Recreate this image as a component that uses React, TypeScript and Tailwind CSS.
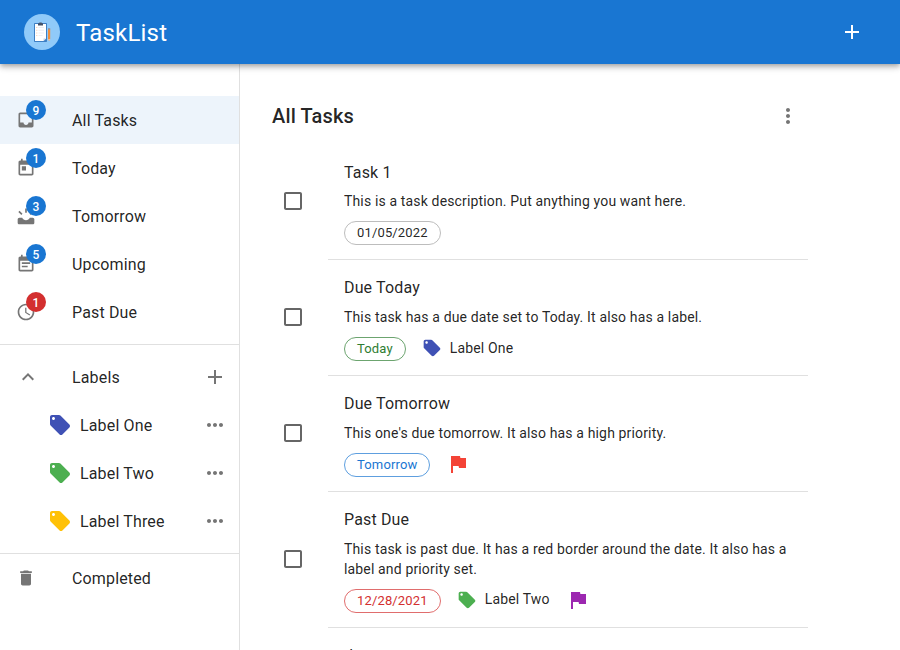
import React from "react";

const P = {
  add: "M19 13h-6v6h-2v-6H5v-2h6V5h2v6h6v2z",
  more: "M12 8c1.1 0 2-.9 2-2s-.9-2-2-2-2 .9-2 2 .9 2 2 2zm0 2c-1.1 0-2 .9-2 2s.9 2 2 2 2-.9 2-2-.9-2-2-2zm0 6c-1.1 0-2 .9-2 2s.9 2 2 2 2-.9 2-2-.9-2-2-2z",
  dots: "M6 10c-1.1 0-2 .9-2 2s.9 2 2 2 2-.9 2-2-.9-2-2-2zm12 0c-1.1 0-2 .9-2 2s.9 2 2 2 2-.9 2-2-.9-2-2-2zm-6 0c-1.1 0-2 .9-2 2s.9 2 2 2 2-.9 2-2-.9-2-2-2z",
  inbox: "M19 3H4.99c-1.11 0-1.98.89-1.98 2L3 19c0 1.1.88 2 1.99 2H19c1.1 0 2-.9 2-2V5c0-1.11-.9-2-2-2zm0 12h-4c0 1.66-1.35 3-3 3s-3-1.34-3-3H4.99V5H19v10z",
  today: "M19 3h-1V1h-2v2H8V1H6v2H5c-1.11 0-1.99.9-1.99 2L3 19c0 1.1.89 2 2 2h14c1.1 0 2-.9 2-2V5c0-1.1-.9-2-2-2zm0 16H5V8h14v11zM7 10h5v5H7z",
  upcoming: "M21.16 7.26l-1.41-1.41-3.56 3.55 1.41 1.41s3.45-3.52 3.56-3.55zM11 3h2v5h-2zM6.4 10.81L7.81 9.4 4.26 5.84 2.84 7.26c.11.03 3.56 3.55 3.56 3.55zM20 14h-3.42c-.77 1.76-2.54 3-4.58 3s-3.81-1.24-4.58-3H4c-1.1 0-2 .9-2 2v4c0 1.1.9 2 2 2h16c1.1 0 2-.9 2-2v-4c0-1.1-.9-2-2-2z",
  note: "M17 10H7v2h10v-2zm2-7h-1V1h-2v2H8V1H6v2H5c-1.11 0-1.99.9-1.99 2L3 19c0 1.1.89 2 2 2h14c1.1 0 2-.9 2-2V5c0-1.1-.9-2-2-2zm0 16H5V8h14v11zm-5-5H7v2h7v-2z",
  clock: "M11.99 2C6.47 2 2 6.48 2 12s4.47 10 9.99 10C17.52 22 22 17.52 22 12S17.52 2 11.99 2zM12 20c-4.42 0-8-3.58-8-8s3.58-8 8-8 8 3.58 8 8-3.58 8-8 8zm.5-13H11v6l5.25 3.15.75-1.23-4.5-2.67z",
  less: "M12 8l-6 6 1.41 1.41L12 10.83l4.59 4.58L18 14z",
  tag: "M21.41 11.58l-9-9C12.05 2.22 11.55 2 11 2H4c-1.1 0-2 .9-2 2v7c0 .55.22 1.05.59 1.42l9 9c.36.36.86.58 1.41.58.55 0 1.05-.22 1.41-.59l7-7c.37-.36.59-.86.59-1.41 0-.55-.23-1.06-.59-1.42zM5.5 7C4.67 7 4 6.33 4 5.5S4.67 4 5.5 4 7 4.67 7 5.5 6.33 7 5.5 7z",
  trash: "M6 19c0 1.1.9 2 2 2h8c1.1 0 2-.9 2-2V7H6v12zM19 4h-3.5l-1-1h-5l-1 1H5v2h14V4z",
  flag: "M14.4 6L14 4H5v17h2v-7h5.6l.4 2h7V6z",
  box: "M19 5v14H5V5h14m0-2H5c-1.1 0-2 .9-2 2v14c0 1.1.9 2 2 2h14c1.1 0 2-.9 2-2V5c0-1.1-.9-2-2-2z",
};

function Icon({ d, className }: { d: string; className: string }) {
  return (
    <svg viewBox="0 0 24 24" fill="currentColor" className={`shrink-0 ${className}`}>
      <path d={d} />
    </svg>
  );
}

function Logo() {
  return (
    <svg viewBox="0 0 36 36" className="size-9 shrink-0">
      <circle cx="18" cy="18" r="18" fill="#90caf9" />
      <rect x="10" y="9" width="13" height="19" rx="0.8" fill="#3d7fc4" />
      <path d="M11 10h11v14.5L19.5 27H11z" fill="#fff" />
      <path d="M22 24.5L19.5 27v-2.5z" fill="#c5d3e6" />
      <path d="M14.5 13.5h5.5M14.5 16.3h5.5M14.5 19h5.5M14.5 21.5h4" stroke="#e3e7ee" strokeWidth="0.7" />
      <path d="M12.3 13.5h1M12.3 16.3h1M12.3 19h1M12.3 21.5h1" stroke="#f7c4a0" strokeWidth="0.9" />
      <path d="M14 9.3h1.3V8.4h2.4v.9H19v2.2h-5z" fill="#455268" />
      <path d="M24 15.3h2.2V25l-1.1 2L24 25z" fill="#f28f3b" />
      <path d="M24 14.3h2.2v1.2H24z" fill="#8b8794" />
      <path d="M24 25h2.2l-1.1 2z" fill="#f6c79c" />
    </svg>
  );
}

const nav = [
  { name: "All Tasks", icon: P.inbox, count: 9, row: "bg-[#1976d2]/8", badge: "bg-[#1976d2]" },
  { name: "Today", icon: P.today, count: 1, row: "", badge: "bg-[#1976d2]" },
  { name: "Tomorrow", icon: P.upcoming, count: 3, row: "", badge: "bg-[#1976d2]" },
  { name: "Upcoming", icon: P.note, count: 5, row: "", badge: "bg-[#1976d2]" },
  { name: "Past Due", icon: P.clock, count: 1, row: "", badge: "bg-[#d32f2f]" },
];

const labels = [
  { name: "Label One", color: "text-[#3f51b5]" },
  { name: "Label Two", color: "text-[#4caf50]" },
  { name: "Label Three", color: "text-[#ffc107]" },
];

type Task = {
  title: string;
  text: string;
  due: string;
  chip: string;
  label?: { name: string; color: string };
  flag?: string;
};

const tasks: Task[] = [
  {
    title: "Task 1",
    text: "This is a task description. Put anything you want here.",
    due: "01/05/2022",
    chip: "border-[#bdbdbd]",
  },
  {
    title: "Due Today",
    text: "This task has a due date set to Today. It also has a label.",
    due: "Today",
    chip: "border-[#2e7d32]/70 text-[#2e7d32]",
    label: labels[0],
  },
  {
    title: "Due Tomorrow",
    text: "This one's due tomorrow. It also has a high priority.",
    due: "Tomorrow",
    chip: "border-[#1976d2]/70 text-[#1976d2]",
    flag: "text-[#f44336]",
  },
  {
    title: "Past Due",
    text: "This task is past due. It has a red border around the date. It also has a label and priority set.",
    due: "12/28/2021",
    chip: "border-[#d32f2f]/70 text-[#d32f2f]",
    label: labels[1],
    flag: "text-[#9c27b0]",
  },
];

function Sidebar() {
  return (
    <nav className="w-60 shrink-0 border-r border-black/12 pt-8">
      <ul className="pb-2">
        {nav.map((n) => (
          <li key={n.name} className={`flex h-12 items-center px-4 ${n.row}`}>
            <span className="relative mr-9 flex">
              <Icon d={n.icon} className="size-5 text-[#757575]" />
              <span
                className={`absolute -top-2.5 -right-2.5 flex size-5 items-center justify-center rounded-full pt-0.5 text-xs leading-none font-medium text-white ${n.badge}`}
              >
                {n.count}
              </span>
            </span>
            <span className="pt-0.5">{n.name}</span>
          </li>
        ))}
      </ul>
      <div className="border-y border-black/12 py-2">
        <div className="flex h-12 items-center pr-3 pl-4">
          <Icon d={P.less} className="mr-8 size-6 text-[#757575]" />
          <span className="flex-1 pt-0.5">Labels</span>
          <Icon d={P.add} className="size-6 text-[#757575]" />
        </div>
        <ul>
          {labels.map((l) => (
            <li key={l.name} className="flex h-12 items-center pr-3 pl-12">
              <Icon d={P.tag} className={`mr-2 size-6 ${l.color}`} />
              <span className="flex-1 pt-0.5">{l.name}</span>
              <Icon d={P.dots} className="size-6 text-[#757575]" />
            </li>
          ))}
        </ul>
      </div>
      <div className="flex h-12 items-center px-4">
        <Icon d={P.trash} className="mr-9 size-5 text-[#757575]" />
        <span className="pt-0.5">Completed</span>
      </div>
    </nav>
  );
}

function TaskRow({ task, first }: { task: Task; first: boolean }) {
  return (
    <li className="flex items-center pl-[9px]">
      <Icon d={P.box} className="mr-[23px] mb-0.5 size-6 text-[#666]" />
      <div className="flex-1 border-b border-black/12 px-4 pt-4 pb-[14px]">
        <h3 className={first ? "-mb-px pt-px" : ""}>{task.title}</h3>
        <p className="mt-[7px] text-sm leading-5 tracking-[0.01071em]">{task.text}</p>
        <div className="mt-[10px] flex h-6 items-center gap-4">
          <span className={`flex h-6 items-center rounded-full border px-3 text-[13px] tracking-[0.15px] ${task.chip}`}>
            {task.due}
          </span>
          {task.label && (
            <span className="-mt-0.5 flex items-center gap-2 text-sm tracking-[0.01071em]">
              <Icon d={P.tag} className={`size-5 ${task.label.color}`} />
              <span className={task.flag ? "pb-0.5" : ""}>{task.label.name}</span>
            </span>
          )}
          {task.flag && <Icon d={P.flag} className={`-mt-0.5 size-6 ${task.flag}`} />}
        </div>
      </div>
    </li>
  );
}

export default function App() {
  return (
    <div className="flex h-[650px] w-[900px] flex-col overflow-hidden bg-white font-[Roboto,sans-serif] text-base leading-6 tracking-[0.00938em] text-black/87">
      <header className="relative z-10 flex h-16 shrink-0 items-center bg-[#1976d2] pr-9 pl-6 text-white shadow-[0px_2px_4px_-1px_rgba(0,0,0,0.2),0px_4px_5px_0px_rgba(0,0,0,0.14),0px_1px_10px_0px_rgba(0,0,0,0.12)]">
        <Logo />
        <h1 className="ml-4 flex-1 pt-0.5 text-2xl tracking-[0.2px]">TaskList</h1>
        <Icon d={P.add} className="size-6" />
      </header>
      <div className="flex min-h-0 flex-1">
        <Sidebar />
        <main className="w-[568px] overflow-hidden pt-10 pl-8">
          <div className="mb-4 flex h-6 items-center justify-between pr-2">
            <h2 className="text-xl font-medium tracking-[0.0075em]">All Tasks</h2>
            <Icon d={P.more} className="size-6 text-[#757575]" />
          </div>
          <ul>
            {tasks.map((t, i) => (
              <TaskRow key={t.title} task={t} first={i === 0} />
            ))}
            <li className="pt-4 pl-[72px]">d</li>
          </ul>
        </main>
      </div>
    </div>
  );
}
